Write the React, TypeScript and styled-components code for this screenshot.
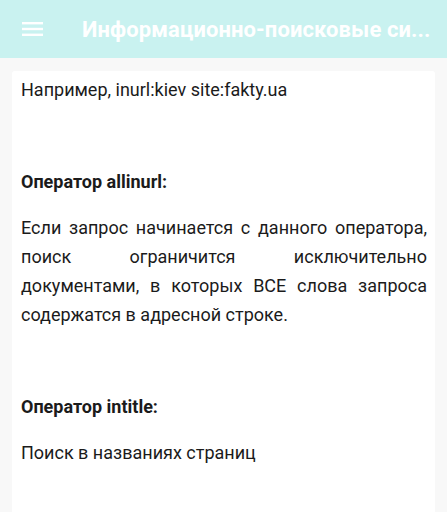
import styled, { createGlobalStyle } from "styled-components";

const GlobalStyle = createGlobalStyle`
    html, body {
        margin: 0;
        padding: 0;
        background-color: #f8f8f8;
    }
    body {
        font-family: Roboto, "Noto Sans", "Liberation Sans", sans-serif;
        -webkit-font-smoothing: antialiased;
    }
`;

const Screen = styled.div`
    width: 447px;
    height: 512px;
    overflow: hidden;
    display: flex;
    flex-direction: column;
    background-color: #f8f8f8;
`;

const AppBar = styled.header`
    flex: 0 0 58px;
    display: flex;
    align-items: center;
    background-color: #c9f2f0;
    color: #ffffff;
`;

const MenuButton = styled.button`
    flex: 0 0 auto;
    width: 64px;
    height: 58px;
    padding: 0 0 0 22px;
    margin: 0;
    border: none;
    background: transparent;
    display: flex;
    align-items: center;
    color: #ffffff;
`;

const Title = styled.h1`
    flex: 1 1 auto;
    min-width: 0;
    margin: 0 8px 0 18px;
    font-size: 22px;
    font-weight: 700;
    letter-spacing: 0.1px;
    white-space: nowrap;
`;

const Content = styled.main`
    flex: 1 1 auto;
    display: flex;
    padding: 13px 12px 0;
`;

const Card = styled.article`
    flex: 1 1 auto;
    background-color: #ffffff;
    border-radius: 3px 3px 0 0;
    padding: 4px 8px 0 9px;
    color: #1b1b1b;
    font-size: 18px;
    line-height: 29px;
`;

const Paragraph = styled.p<{ $spaced?: boolean; $bold?: boolean }>`
    margin: ${({ $spaced }) => ($spaced ? "63px" : "0")} 0 17px;
    font-weight: ${({ $bold }) => ($bold ? 700 : 400)};
    text-align: justify;
`;

const MenuIcon = () => (
    <svg width="21" height="16" viewBox="0 0 21 16" fill="currentColor">
        <rect x="0" y="1" width="21" height="2.4" />
        <rect x="0" y="6.8" width="21" height="2.4" />
        <rect x="0" y="12.6" width="21" height="2.4" />
    </svg>
);

const App = () => (
    <Screen>
        <GlobalStyle />
        <AppBar>
            <MenuButton aria-label="Меню">
                <MenuIcon />
            </MenuButton>
            <Title>Информационно-поисковые си...</Title>
        </AppBar>
        <Content>
            <Card>
                <Paragraph>Например, inurl:kiev site:fakty.ua</Paragraph>
                <Paragraph $spaced $bold>Оператор allinurl:</Paragraph>
                <Paragraph>
                    Если запрос начинается с данного оператора, поиск ограничится
                    исключительно документами, в которых ВСЕ слова запроса содержатся
                    в адресной строке.
                </Paragraph>
                <Paragraph $spaced $bold>Оператор intitle:</Paragraph>
                <Paragraph>Поиск в названиях страниц</Paragraph>
            </Card>
        </Content>
    </Screen>
);

export default App;
